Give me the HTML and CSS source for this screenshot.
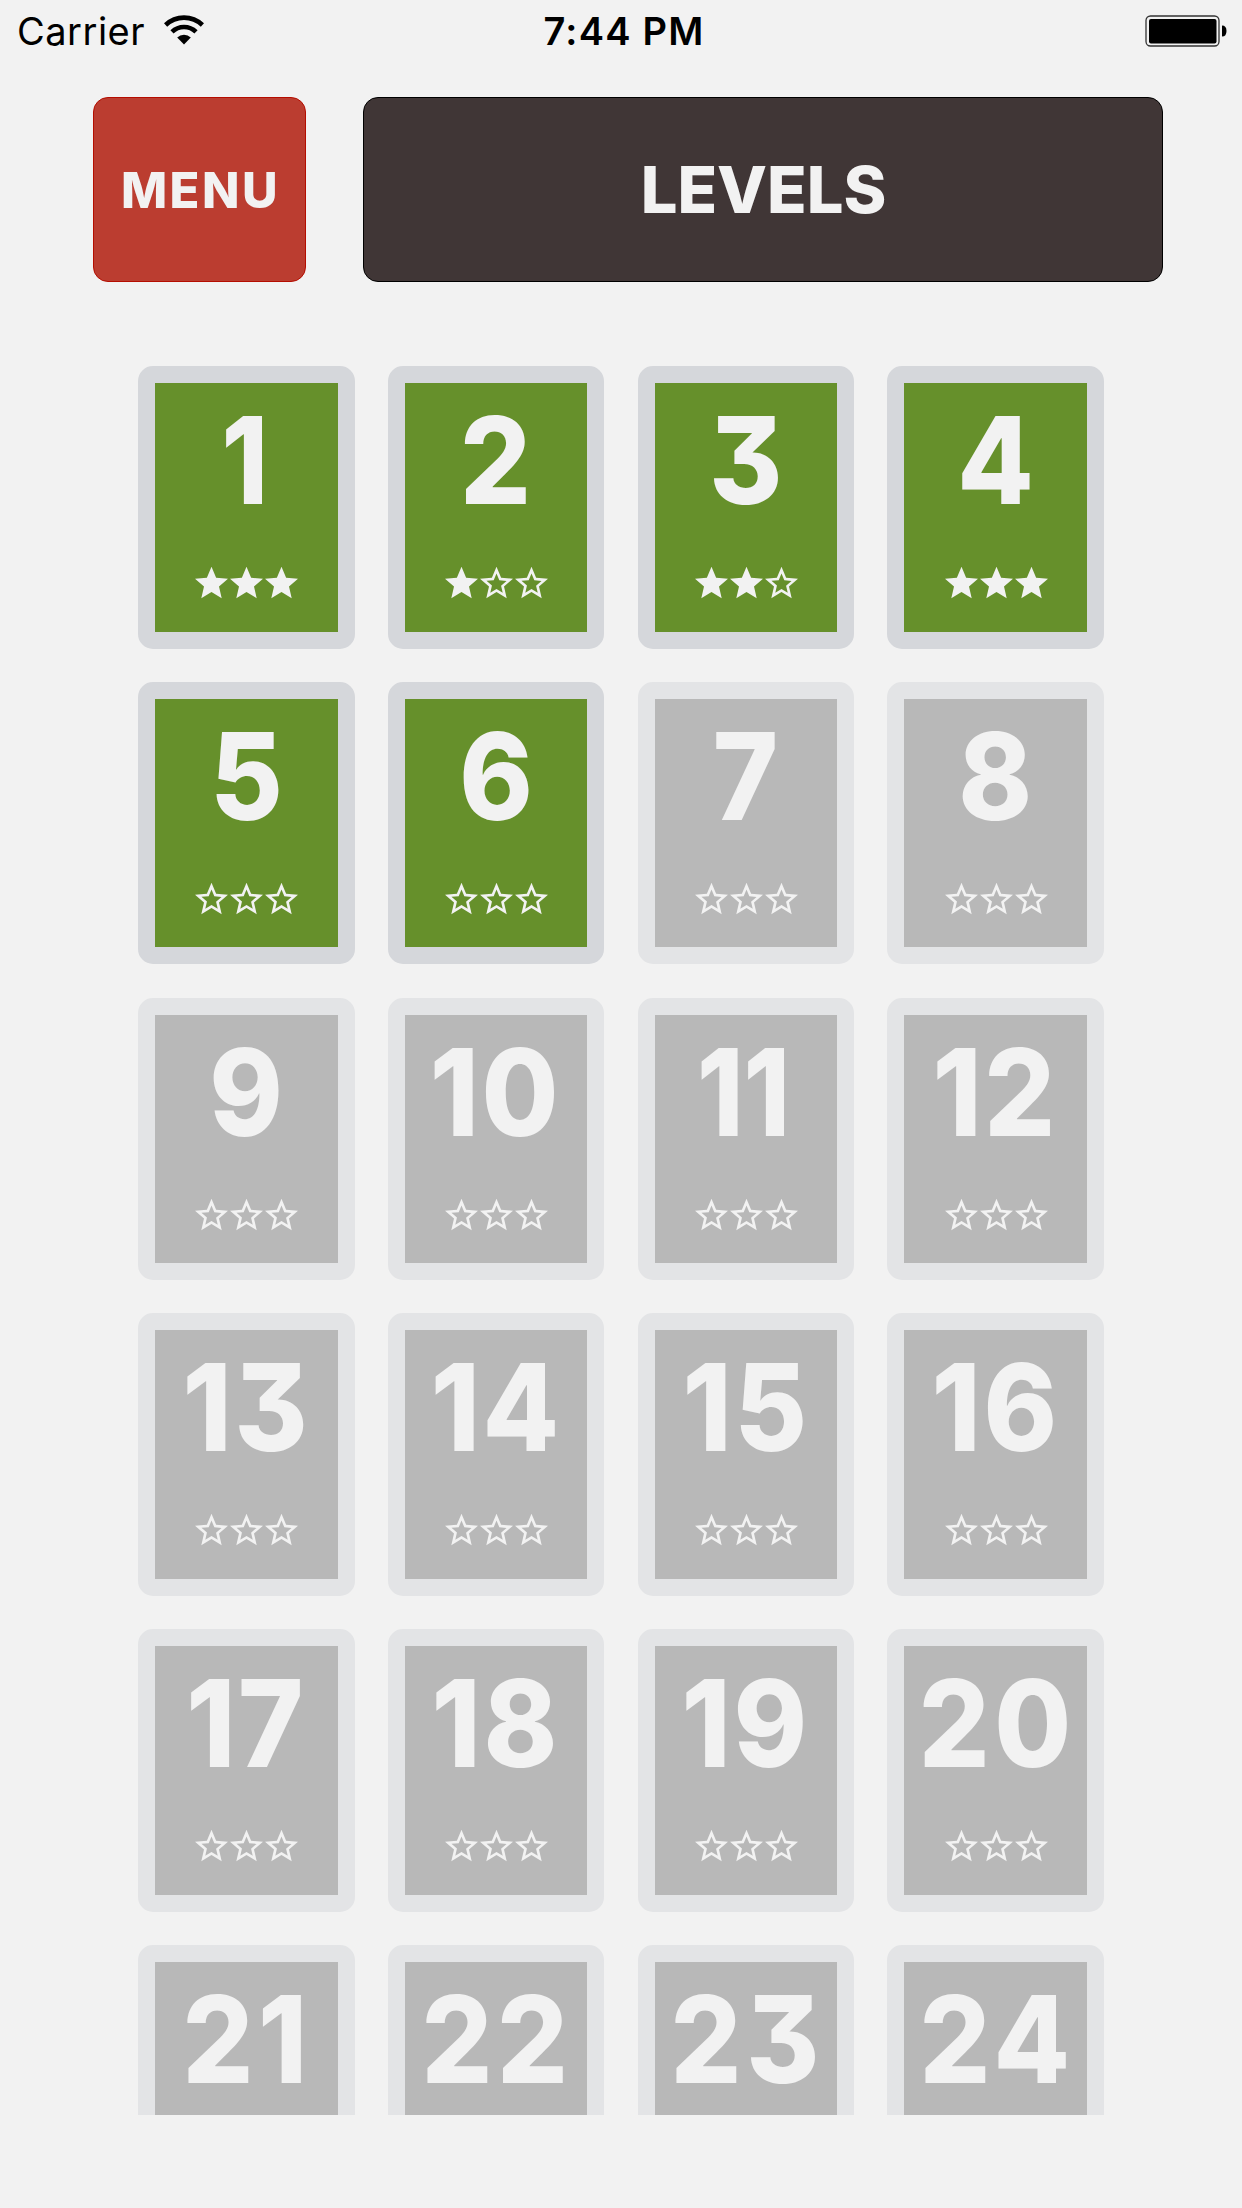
FILE: index.html
```html
<!DOCTYPE html>
<html lang="en">
<head>
<meta charset="utf-8">
<title>Levels</title>
<link rel="stylesheet" href="styles.css">
</head>
<body>
<svg class="sprite" aria-hidden="true">
  <symbol id="full" viewBox="2 2 20 19"><path d="M12 17.27 18.18 21l-1.63-7.03L22 9.24l-7.19-.61L12 2 9.19 8.63 2 9.24l5.46 4.73L5.82 21z"/></symbol>
  <symbol id="empty" viewBox="2 2 20 19"><path d="m22 9.24-7.19-.62L12 2 9.19 8.63 2 9.24l5.46 4.73L5.82 21 12 17.27 18.18 21l-1.63-7.03zM12 15.4l-3.76 2.27 1-4.28-3.32-2.88 4.38-.38L12 6.1l1.71 4.04 4.38.38-3.32 2.88 1 4.28z"/></symbol>
  <symbol id="s0" viewBox="0 0 103 33"><use href="#empty" width="33" height="33"/><use href="#empty" x="35" width="33" height="33"/><use href="#empty" x="70" width="33" height="33"/></symbol>
  <symbol id="s1" viewBox="0 0 103 33"><use href="#full" width="33" height="33"/><use href="#empty" x="35" width="33" height="33"/><use href="#empty" x="70" width="33" height="33"/></symbol>
  <symbol id="s2" viewBox="0 0 103 33"><use href="#full" width="33" height="33"/><use href="#full" x="35" width="33" height="33"/><use href="#empty" x="70" width="33" height="33"/></symbol>
  <symbol id="s3" viewBox="0 0 103 33"><use href="#full" width="33" height="33"/><use href="#full" x="35" width="33" height="33"/><use href="#full" x="70" width="33" height="33"/></symbol>
</svg>
<header class="status">
  <div class="network"><span class="carrier">Carrier</span>
    <svg class="wifi" viewBox="0 0 40 30"><path d="M20 29.5 13.2 22.6a9.8 9.8 0 0 1 13.6 0z"/><path class="arc" d="M8 16.9a17.2 17.2 0 0 1 24 0M1.6 10a26.6 26.6 0 0 1 36.8 0"/></svg>
  </div>
  <div class="clock">7:44 PM</div>
  <svg class="battery" viewBox="0 0 82 32"><rect class="shell" x="1" y="1" width="73" height="30" rx="4.5"/><rect x="4" y="4" width="67.5" height="24.5" rx="2"/><path d="M77 10.5q4.500 0 4.500 5.500t-4.500 5.500z"/></svg>
</header>
<div class="topbar">
  <button class="menu">MENU</button>
  <h1 class="title">LEVELS</h1>
</div>
<main class="levels">
  <div class="card open"><span class="num one">1</span><svg class="stars"><use href="#s3"/></svg></div>
  <div class="card open"><span class="num">2</span><svg class="stars"><use href="#s1"/></svg></div>
  <div class="card open"><span class="num">3</span><svg class="stars"><use href="#s2"/></svg></div>
  <div class="card open"><span class="num">4</span><svg class="stars"><use href="#s3"/></svg></div>
  <div class="card open"><span class="num">5</span><svg class="stars"><use href="#s0"/></svg></div>
  <div class="card open"><span class="num">6</span><svg class="stars"><use href="#s0"/></svg></div>
  <div class="card"><span class="num">7</span><svg class="stars"><use href="#s0"/></svg></div>
  <div class="card"><span class="num">8</span><svg class="stars"><use href="#s0"/></svg></div>
  <div class="card"><span class="num">9</span><svg class="stars"><use href="#s0"/></svg></div>
  <div class="card"><span class="num pair">10</span><svg class="stars"><use href="#s0"/></svg></div>
  <div class="card"><span class="num one">11</span><svg class="stars"><use href="#s0"/></svg></div>
  <div class="card"><span class="num pair">12</span><svg class="stars"><use href="#s0"/></svg></div>
  <div class="card"><span class="num pair">13</span><svg class="stars"><use href="#s0"/></svg></div>
  <div class="card"><span class="num pair">14</span><svg class="stars"><use href="#s0"/></svg></div>
  <div class="card"><span class="num pair">15</span><svg class="stars"><use href="#s0"/></svg></div>
  <div class="card"><span class="num pair">16</span><svg class="stars"><use href="#s0"/></svg></div>
  <div class="card"><span class="num pair">17</span><svg class="stars"><use href="#s0"/></svg></div>
  <div class="card"><span class="num pair">18</span><svg class="stars"><use href="#s0"/></svg></div>
  <div class="card"><span class="num pair">19</span><svg class="stars"><use href="#s0"/></svg></div>
  <div class="card"><span class="num twenty">20</span><svg class="stars"><use href="#s0"/></svg></div>
  <div class="card"><span class="num twenty">21</span></div>
  <div class="card"><span class="num twenty">22</span></div>
  <div class="card"><span class="num twenty">23</span></div>
  <div class="card"><span class="num twenty">24</span></div>
</main>
</body>
</html>
```
FILE: styles.css
```css
* { box-sizing: border-box; }
body {
  margin: 0;
  width: 1242px;
  height: 2208px;
  overflow: hidden;
  background: #f2f2f2;
  font-family: Inter, "Liberation Sans", sans-serif;
}
.sprite { position: absolute; width: 0; height: 0; }

.status {
  display: grid;
  grid-template-columns: 1fr auto 1fr;
  align-items: center;
  height: 62px;
  padding: 0 15px 0 17px;
  font-size: 38px;
  line-height: 62px;
  color: #000;
}
.network { display: flex; align-items: center; gap: 19px; }
.carrier { letter-spacing: 0.5px; }
.clock { padding-left: 4px; font-weight: 600; letter-spacing: 1.200px; }
.wifi { width: 40px; height: 30px; margin-top: -3px; }
.arc { fill: none; stroke: #000; stroke-width: 4.6; }
.battery { width: 82px; height: 32px; justify-self: end; }
.shell { fill: none; stroke: #333; stroke-width: 1.3; }

.topbar {
  display: flex;
  gap: 57px;
  margin: 35px 79px 0 93px;
  height: 185px;
}
.menu, .title {
  display: flex;
  align-items: center;
  justify-content: center;
  margin: 0;
  border-radius: 15px;
  color: #f2f2f2;
  font-family: inherit;
  font-weight: 800;
}
.menu {
  width: 213px;
  padding: 2px 0 0 2px;
  border: 1px solid #b50d00;
  background: #bb3d30;
  font-size: 49px;
  letter-spacing: 2.500px;
}
.title {
  width: 800px;
  padding: 0 0 0 1px;
  border: 1px solid #000;
  background: #403636;
  font-size: 65px;
}

.levels {
  display: grid;
  grid-template-columns: repeat(4, 216.500px);
  grid-auto-rows: 282.500px;
  gap: 33.300px;
  height: 1748.500px;
  margin: 84px 0 0 138px;
  overflow: hidden;
}
.card {
  display: flex;
  flex-direction: column;
  align-items: center;
  border: 17px solid #e3e4e6;
  border-radius: 15px;
  background: #b8b8b8;
  color: #f2f2f2;
}
.open { border-color: #d5d7db; background: #66902b; }
.num {
  margin-top: 16px;
  font-size: 121px;
  font-weight: 800;
  line-height: 122px;
  font-feature-settings: "cv09" 1;
  transform: scaleX(0.92);
}
.one { transform: translateX(-2px) scaleX(0.87); }
.pair { letter-spacing: 3px; text-indent: 0; }
.twenty { letter-spacing: 5px; text-indent: 3px; }
.stars { width: 103px; height: 33px; margin: 45px 0 0 1px; fill: #f2f2f2; }
```
